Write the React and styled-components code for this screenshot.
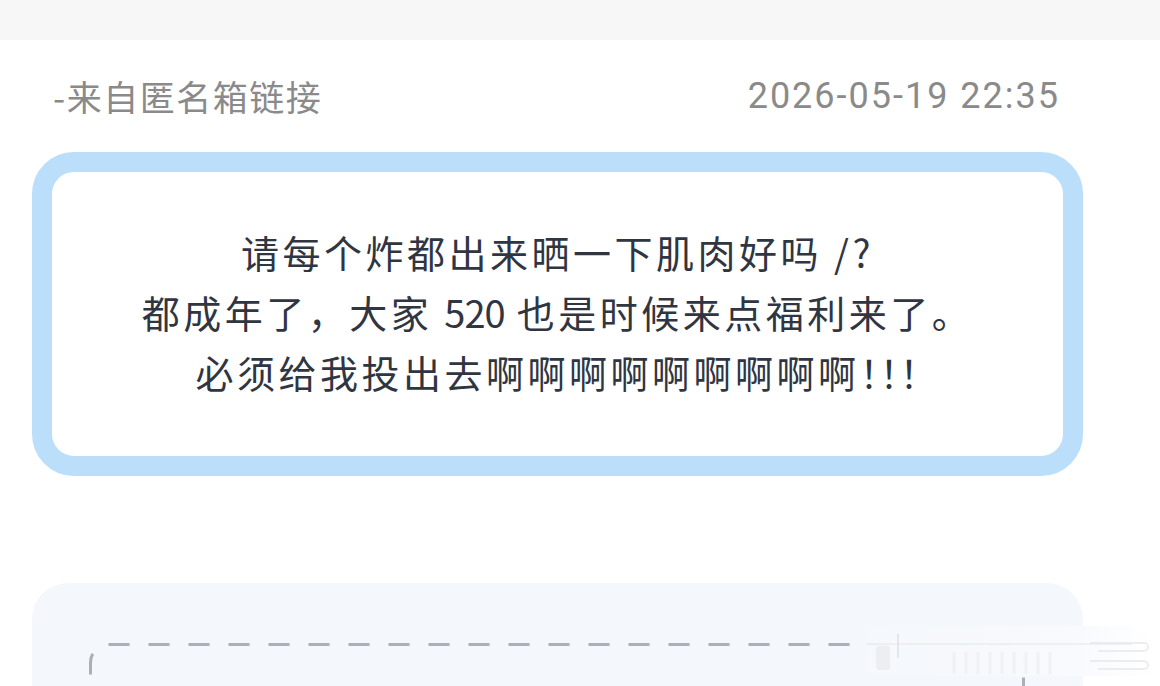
import React from "react";
import styled, { createGlobalStyle } from "styled-components";

const GlobalStyle = createGlobalStyle`
  html, body {
    margin: 0;
    padding: 0;
    background: #ffffff;
    overflow: hidden;
  }
  body {
    font-family: "Noto Sans CJK SC", "Noto Sans", sans-serif;
  }
`;

const Page = styled.div`
  position: relative;
  width: 1160px;
  height: 686px;
  overflow: hidden;
  background: #ffffff;
`;

const TopBar = styled.div`
  height: 40px;
  background: #f7f7f8;
`;

const Content = styled.div`
  padding: 0 77px 0 32px;
`;

const MetaRow = styled.div`
  display: flex;
  justify-content: space-between;
  align-items: center;
  height: 48px;
  padding: 32px 23px 0 21px;
`;

const Source = styled.span`
  font-family: "Noto Sans CJK SC", sans-serif;
  font-size: 35px;
  color: #8a8a8a;
  letter-spacing: 1.5px;
  line-height: 48px;
`;

const Stamp = styled.span`
  font-family: Roboto, "Liberation Sans", sans-serif;
  font-size: 36px;
  letter-spacing: 2px;
  color: #8a8a8a;
  line-height: 48px;
`;

const MessageCard = styled.div`
  box-sizing: border-box;
  margin-top: 32px;
  height: 324px;
  border: 20px solid #bbdefb;
  border-radius: 42px;
  background: #ffffff;
  display: flex;
  align-items: center;
  justify-content: center;
`;

const Message = styled.p`
  margin: -4px 0 0;
  text-align: center;
  font-family: "Noto Sans CJK SC", sans-serif;
  font-size: 38px;
  letter-spacing: 3.5px;
  line-height: 60px;
  color: #2f3642;
`;

const Num = styled.span`
  letter-spacing: -1px;
`;

const Bangs = styled.span`
  letter-spacing: -18px;
`;

const ReplyCard = styled.div`
  margin-top: 107px;
  height: 200px;
  border-radius: 36px;
  background: #f4f7fc;
  padding: 59.5px 58.5px 0 56.5px;
`;

const DashedFrame = styled.div`
  position: relative;
  height: 150px;
`;

const FrameLines = styled.svg`
  position: absolute;
  inset: 0;
  width: 100%;
  height: 100%;
  overflow: visible;
`;

const Watermark = styled.svg`
  position: absolute;
  left: 862px;
  top: 626px;
  width: 292px;
  height: 54px;
`;

const W = 936;

export default function App() {
  return (
    <Page>
      <GlobalStyle />
      <TopBar />
      <Content>
        <MetaRow>
          <Source>-来自匿名箱链接</Source>
          <Stamp>2026-05-19 22:35</Stamp>
        </MetaRow>
        <MessageCard>
          <Message>
            请每个炸都出来晒一下肌肉好吗 /?
            <br />
            都成年了，大家 <Num>520</Num> 也是时候来点福利来了。
            <br />
            必须给我投出去啊啊啊啊啊啊啊啊啊<Bangs>！！！</Bangs>
          </Message>
        </MessageCard>
        <ReplyCard>
          <DashedFrame>
            <FrameLines viewBox={`0 0 ${W} 150`} preserveAspectRatio="none">
              <path
                d={`M 19.5 1.5 H ${W - 19.5} A 18 18 0 0 1 ${W - 1.5} 19.5`}
                fill="none"
                stroke="#a8b0b9"
                strokeWidth="3"
                strokeDasharray="21 19"
              />
              <path
                d="M 19.5 1.5 A 18 18 0 0 0 1.5 19.5 V 150"
                fill="none"
                stroke="#a8b0b9"
                strokeWidth="3"
                strokeDasharray="21 19"
                strokeDashoffset="21"
              />
              <path
                d={`M ${W - 1.5} 34.5 V 150`}
                fill="none"
                stroke="#a8b0b9"
                strokeWidth="3"
                strokeDasharray="21 19"
              />
            </FrameLines>
          </DashedFrame>
        </ReplyCard>
      </Content>
      <Watermark viewBox="0 0 292 54">
        <defs>
          <linearGradient id="wmfade" x1="0" x2="1" y1="0" y2="0">
            <stop offset="0" stopColor="#f5f8fc" stopOpacity="0.97" />
            <stop offset="0.75" stopColor="#f8fafd" stopOpacity="0.97" />
            <stop offset="1" stopColor="#ffffff" stopOpacity="1" />
          </linearGradient>
        </defs>
        <rect x="4" y="0" width="288" height="50" fill="url(#wmfade)" />
        <line x1="4" y1="18" x2="270" y2="18" stroke="#eaecef" strokeWidth="1.5" />
        <rect x="14" y="20" width="14" height="24" rx="3" fill="#eceef1" />
        <line x1="36" y1="8" x2="36" y2="32" stroke="#e3e6ea" strokeWidth="2" />
        <g stroke="#eff1f4" strokeWidth="3">
          <line x1="92" y1="26" x2="92" y2="48" />
          <line x1="104" y1="26" x2="104" y2="48" />
          <line x1="116" y1="26" x2="116" y2="48" />
          <line x1="128" y1="26" x2="128" y2="48" />
          <line x1="140" y1="26" x2="140" y2="48" />
          <line x1="152" y1="26" x2="152" y2="48" />
          <line x1="164" y1="26" x2="164" y2="48" />
          <line x1="176" y1="26" x2="176" y2="48" />
          <line x1="188" y1="26" x2="188" y2="48" />
        </g>
        <path d="M 228 17 H 282 A 4 4 0 0 1 282 25 H 236" fill="none" stroke="#e6e8ec" strokeWidth="1.5" />
        <path d="M 228 35 H 282 A 4 4 0 0 1 282 43 H 236" fill="none" stroke="#e6e8ec" strokeWidth="1.5" />
      </Watermark>
    </Page>
  );
}
